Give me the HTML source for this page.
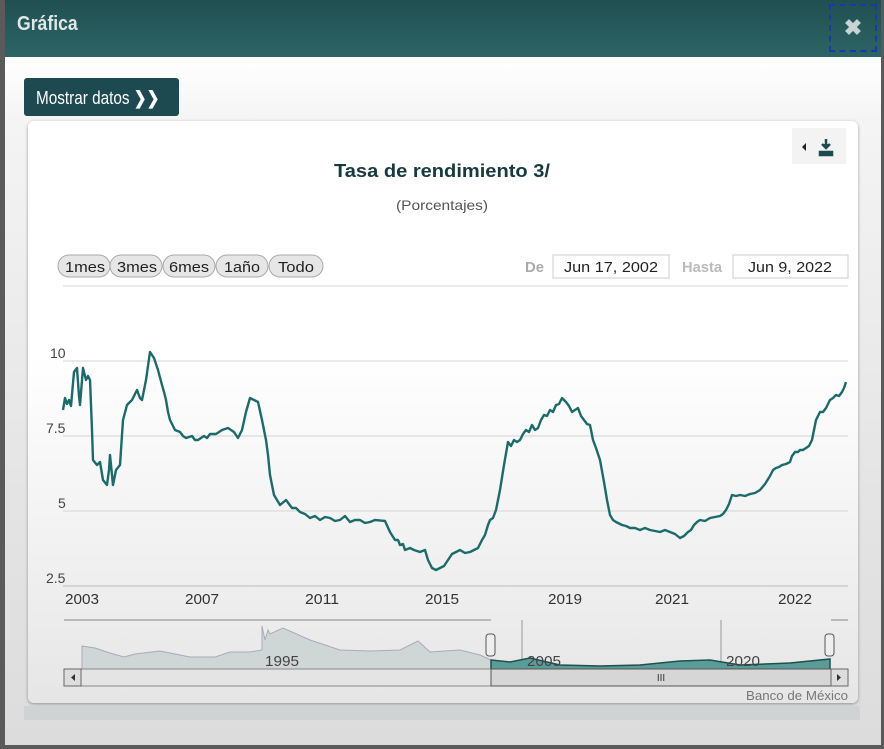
<!DOCTYPE html>
<html><head><meta charset="utf-8"><style>
body{margin:0;width:884px;height:749px;background:#5a5a5a;position:relative;overflow:hidden;font-family:"Liberation Sans",sans-serif}
.modal{position:absolute;left:5px;top:0;width:876px;height:745px;background:linear-gradient(#fff 60px,#f4f4f4 120px,#e4e4e4 500px,#dcdcdc);}
.hdr{position:absolute;left:0;top:0;width:876px;height:57px;background:linear-gradient(#214f51,#2c6566);}
.hdr .t{position:absolute;left:12px;top:13px;color:#e0e8e7;font-size:20px;font-weight:bold;transform:scaleX(.88);transform-origin:left}
.close{position:absolute;left:824px;top:4px;width:48px;height:48px;border:2px dashed #1a3aa8;box-sizing:border-box;color:#c8d4d3;font-size:22px;font-weight:bold;text-align:center;line-height:44px}
.btn{position:absolute;left:19px;top:78px;width:155px;height:38px;background:#1d4a50;border-radius:3px;color:#fff;font-size:18px;line-height:40px;padding-left:12px;box-sizing:border-box;white-space:nowrap}
.btn span{display:inline-block;transform:scaleX(.85);transform-origin:left}
.card{position:absolute;left:23px;top:121px;width:830px;height:582px;background:linear-gradient(#fff 40%,#e6e6e6);border-radius:6px;box-shadow:0 1px 3px rgba(0,0,0,.35)}
.bar{position:absolute;left:19px;top:706px;width:836px;height:14px;background:#cfd3d3}
</style></head><body>
<div class="modal">
<div class="hdr"><div class="t">Gráfica</div><div class="close">✖</div></div>
<div class="btn"><span>Mostrar datos <b>❯❯</b></span></div>
<div class="card"></div>
<div class="bar"></div>
</div>
<svg width="884" height="749" style="position:absolute;left:0;top:0" font-family="Liberation Sans, sans-serif">
<rect x="792" y="128" width="54" height="36" fill="#f3f3f3"/>
<path d="M806 143 L802 147 L806 151Z" fill="#222"/>
<path d="M826 139v9m-4-4l4 4 4-4M820 152h12v3h-12z" stroke="#1d4a50" stroke-width="2.5" fill="#1d4a50"/>
<text x="442" y="177" text-anchor="middle" font-size="18" fill="#163a3d" font-weight="bold" textLength="216" lengthAdjust="spacingAndGlyphs">Tasa de rendimiento 3/</text>
<text x="442" y="210" text-anchor="middle" font-size="14" fill="#555" textLength="92" lengthAdjust="spacingAndGlyphs">(Porcentajes)</text>
<g stroke="#aaa">
<rect x="58" y="255" width="52" height="22" rx="11" fill="#e6e6e6"/><rect x="110" y="255" width="52" height="22" rx="11" fill="#e6e6e6"/><rect x="163" y="255" width="52" height="22" rx="11" fill="#e6e6e6"/><rect x="216" y="255" width="52" height="22" rx="11" fill="#e6e6e6"/><rect x="269" y="255" width="54" height="22" rx="11" fill="#e6e6e6"/>
</g>
<g font-size="15" fill="#222" text-anchor="middle"><text x="85" y="272" textLength="40" lengthAdjust="spacingAndGlyphs">1mes</text><text x="137" y="272" textLength="40" lengthAdjust="spacingAndGlyphs">3mes</text><text x="189" y="272" textLength="40" lengthAdjust="spacingAndGlyphs">6mes</text><text x="242" y="272" textLength="36" lengthAdjust="spacingAndGlyphs">1año</text><text x="296" y="272" textLength="36" lengthAdjust="spacingAndGlyphs">Todo</text></g>
<text x="525" y="272" font-size="15" fill="#aaa" font-weight="bold" textLength="19" lengthAdjust="spacingAndGlyphs">De</text>
<rect x="553" y="255" width="116" height="23" fill="#fff" stroke="#ccc"/><text x="611" y="272" text-anchor="middle" font-size="15" fill="#222" textLength="94" lengthAdjust="spacingAndGlyphs">Jun 17, 2002</text>
<text x="682" y="272" font-size="15" fill="#bbb" font-weight="bold" textLength="40" lengthAdjust="spacingAndGlyphs">Hasta</text>
<rect x="733" y="255" width="115" height="23" fill="#fff" stroke="#ccc"/><text x="790" y="272" text-anchor="middle" font-size="15" fill="#222" textLength="84" lengthAdjust="spacingAndGlyphs">Jun 9, 2022</text>
<g stroke="#d4d4d4"><line x1="63" y1="286" x2="848" y2="286"/><line x1="63" y1="361" x2="848" y2="361"/><line x1="63" y1="436" x2="848" y2="436"/><line x1="63" y1="511" x2="848" y2="511"/><line x1="63" y1="586" x2="848" y2="586" stroke="#bbb"/></g>
<g font-size="14" fill="#444"><text x="50" y="358">10</text><text x="46" y="433">7.5</text><text x="58" y="508">5</text><text x="46" y="583">2.5</text></g>
<g font-size="15" fill="#333" text-anchor="middle"><text x="82" y="604" textLength="34" lengthAdjust="spacingAndGlyphs">2003</text><text x="202" y="604" textLength="34" lengthAdjust="spacingAndGlyphs">2007</text><text x="322" y="604" textLength="34" lengthAdjust="spacingAndGlyphs">2011</text><text x="442" y="604" textLength="34" lengthAdjust="spacingAndGlyphs">2015</text><text x="565" y="604" textLength="34" lengthAdjust="spacingAndGlyphs">2019</text><text x="672" y="604" textLength="34" lengthAdjust="spacingAndGlyphs">2021</text><text x="795" y="604" textLength="34" lengthAdjust="spacingAndGlyphs">2022</text></g>
<polyline fill="none" stroke="#1a6b6a" stroke-width="2.4" stroke-linejoin="round" points="63,410 65,398 67,404 69,400 71,406 74,372 77,368 79,396 80,405 83,368 86,380 88,376 90,380 92,430 93,460 97,465 100,462 103,480 107,485 109,470 110,455 113,485 116,470 120,465 123,420 127,405 132,400 135,394 137,390 140,398 142,400 146,380 150,352 154,358 158,370 162,385 164,392 166,400 168,412 170,420 175,430 180,432 183,436 186,438 192,436 195,440 198,440 204,436 207,438 210,434 216,434 222,430 228,428 234,432 238,438 242,430 246,412 250,398 254,400 258,402 262,420 266,440 268,455 270,475 274,495 280,505 286,500 292,508 296,508 300,512 305,514 310,518 315,516 320,520 325,517 330,518 335,521 340,520 345,516 350,522 355,520 360,520 365,523 370,522 375,520 385,521 390,532 395,540 398,540 400,545 403,544 405,550 410,548 414,550 420,552 425,550 428,560 432,568 436,570 440,568 444,566 448,560 452,554 456,552 460,550 465,553 470,552 474,550 478,548 482,540 485,535 488,525 490,520 493,518 496,510 500,490 504,465 508,442 511,446 514,440 517,442 520,440 523,434 526,430 529,432 532,425 535,430 538,428 541,420 544,415 547,416 550,410 553,412 556,405 559,404 562,398 564,400 566,402 569,406 572,412 575,410 578,408 581,416 584,420 587,424 590,425 593,440 596,448 600,460 604,482 607,500 610,515 613,520 616,522 620,524 622,525 626,526 630,528 635,528 640,530 645,528 650,530 655,531 660,532 665,530 670,532 675,534 680,538 684,536 688,532 691,530 694,525 697,522 700,520 705,521 710,518 715,517 720,516 723,514 726,510 729,504 732,495 736,496 740,495 745,496 750,494 755,493 760,490 765,484 770,476 773,470 776,468 779,467 782,465 786,464 790,462 792,456 795,452 798,452 800,450 803,450 806,448 809,446 812,440 814,430 816,420 818,416 820,412 823,412 826,408 828,404 830,400 833,398 836,395 839,396 842,392 844,388 846,382"/>
<line x1="64" y1="620" x2="491" y2="620" stroke="#aaa" stroke-width="1.5"/>
<line x1="831" y1="620" x2="848" y2="620" stroke="#aaa" stroke-width="1.5"/>
<line x1="522" y1="620" x2="522" y2="670" stroke="#999"/><line x1="721" y1="620" x2="721" y2="670" stroke="#999"/>
<path d="M82,646 L95,648 L110,653 L124,657 L135,654 L160,651 L190,657 L215,657 L230,652 L250,652 L262,650 L262,626 L265,640 L268,630 L270,634 L283,628 L292,632 L310,640 L340,650 L370,651 L400,650 L418,641 L430,652 L460,650 L480,655 L491,660 L491,670 L82,670Z" fill="#cfd6d6" stroke="#aab" stroke-width="1"/>
<path d="M491,660 L510,662 L530,658 L560,665 L600,666 L640,665 L680,661 L710,660 L740,665 L790,663 L830,659 L830,670 L491,670Z" fill="#5b9c98" stroke="#1f4f4f" stroke-width="1.5"/>
<g font-size="15" fill="#444"><text x="265" y="666" textLength="34" lengthAdjust="spacingAndGlyphs">1995</text><text x="527" y="666" textLength="34" lengthAdjust="spacingAndGlyphs">2005</text><text x="726" y="666" textLength="34" lengthAdjust="spacingAndGlyphs">2020</text></g>
<rect x="486" y="634" width="9" height="22" rx="3" fill="#eee" stroke="#555"/><rect x="825" y="634" width="9" height="22" rx="3" fill="#eee" stroke="#555"/>
<rect x="64" y="669" width="784" height="17" fill="#e4e4e4" stroke="#888"/>
<rect x="64" y="669" width="17" height="17" fill="#ddd" stroke="#666"/><path d="M75 674l-4 3.5 4 3.5z" fill="#333"/>
<rect x="491" y="669" width="340" height="17" fill="#d6d6d6" stroke="#555"/><text x="661" y="681" text-anchor="middle" font-size="10" fill="#333">III</text>
<rect x="831" y="669" width="17" height="17" fill="#ddd" stroke="#666"/><path d="M837 674l4 3.5-4 3.5z" fill="#333"/>
<text x="848" y="700" text-anchor="end" font-size="13" fill="#777" textLength="102" lengthAdjust="spacingAndGlyphs">Banco de México</text>
</svg>
</body></html>
